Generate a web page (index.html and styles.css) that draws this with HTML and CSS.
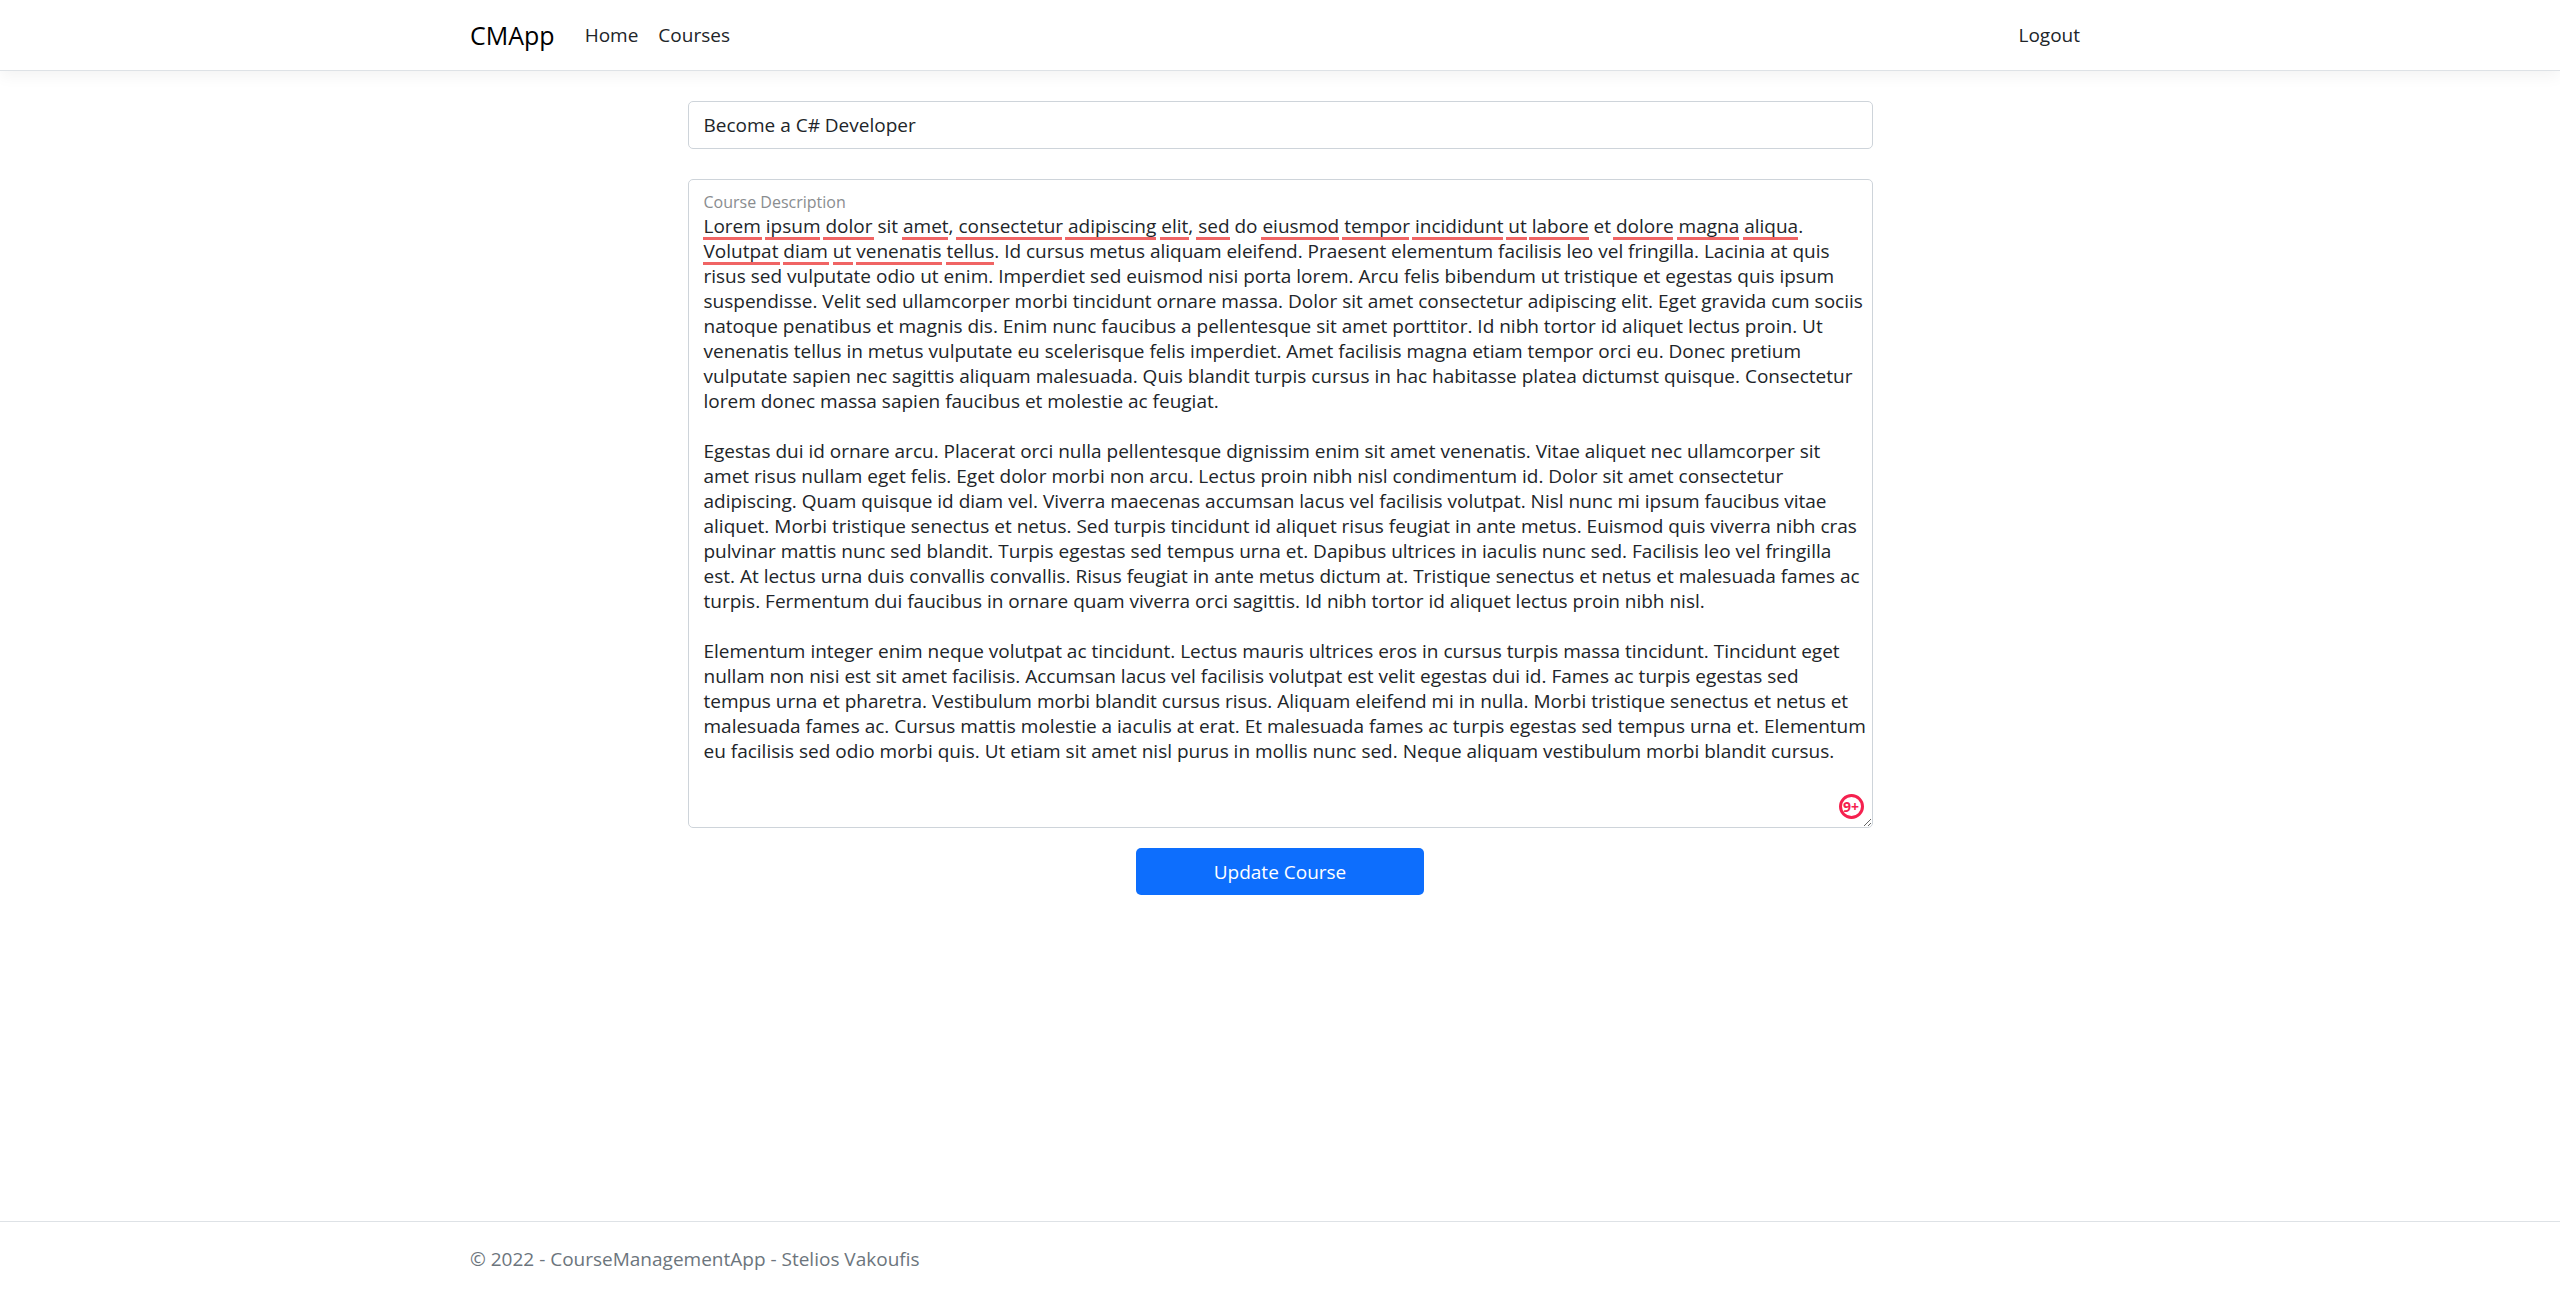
FILE: index.html
```html
<!DOCTYPE html>
<html lang="en">
<head>
<meta charset="utf-8">
<meta name="viewport" content="width=device-width, initial-scale=1">
<title>Update Course - CMApp</title>
<link rel="stylesheet" href="styles.css">
</head>
<body>
<header class="navbar">
  <nav class="container navbar-inner">
    <a class="brand" href="#">CMApp</a>
    <a class="nav-link" href="#">Home</a>
    <a class="nav-link" href="#">Courses</a>
    <a class="nav-link nav-end" href="#">Logout</a>
  </nav>
</header>
<main class="main">
  <form class="course-form">
    <input class="field" type="text" aria-label="Course Title" value="Become a C# Developer">
    <div class="floating">
      <textarea class="field description" id="description" wrap="off" spellcheck="false">Lorem ipsum dolor sit amet, consectetur adipiscing elit, sed do eiusmod tempor incididunt ut labore et dolore magna aliqua.
Volutpat diam ut venenatis tellus. Id cursus metus aliquam eleifend. Praesent elementum facilisis leo vel fringilla. Lacinia at quis
risus sed vulputate odio ut enim. Imperdiet sed euismod nisi porta lorem. Arcu felis bibendum ut tristique et egestas quis ipsum
suspendisse. Velit sed ullamcorper morbi tincidunt ornare massa. Dolor sit amet consectetur adipiscing elit. Eget gravida cum sociis
natoque penatibus et magnis dis. Enim nunc faucibus a pellentesque sit amet porttitor. Id nibh tortor id aliquet lectus proin. Ut
venenatis tellus in metus vulputate eu scelerisque felis imperdiet. Amet facilisis magna etiam tempor orci eu. Donec pretium
vulputate sapien nec sagittis aliquam malesuada. Quis blandit turpis cursus in hac habitasse platea dictumst quisque. Consectetur
lorem donec massa sapien faucibus et molestie ac feugiat.

Egestas dui id ornare arcu. Placerat orci nulla pellentesque dignissim enim sit amet venenatis. Vitae aliquet nec ullamcorper sit
amet risus nullam eget felis. Eget dolor morbi non arcu. Lectus proin nibh nisl condimentum id. Dolor sit amet consectetur
adipiscing. Quam quisque id diam vel. Viverra maecenas accumsan lacus vel facilisis volutpat. Nisl nunc mi ipsum faucibus vitae
aliquet. Morbi tristique senectus et netus. Sed turpis tincidunt id aliquet risus feugiat in ante metus. Euismod quis viverra nibh cras
pulvinar mattis nunc sed blandit. Turpis egestas sed tempus urna et. Dapibus ultrices in iaculis nunc sed. Facilisis leo vel fringilla
est. At lectus urna duis convallis convallis. Risus feugiat in ante metus dictum at. Tristique senectus et netus et malesuada fames ac
turpis. Fermentum dui faucibus in ornare quam viverra orci sagittis. Id nibh tortor id aliquet lectus proin nibh nisl.

Elementum integer enim neque volutpat ac tincidunt. Lectus mauris ultrices eros in cursus turpis massa tincidunt. Tincidunt eget
nullam non nisi est sit amet facilisis. Accumsan lacus vel facilisis volutpat est velit egestas dui id. Fames ac turpis egestas sed
tempus urna et pharetra. Vestibulum morbi blandit cursus risus. Aliquam eleifend mi in nulla. Morbi tristique senectus et netus et
malesuada fames ac. Cursus mattis molestie a iaculis at erat. Et malesuada fames ac turpis egestas sed tempus urna et. Elementum
eu facilisis sed odio morbi quis. Ut etiam sit amet nisl purus in mollis nunc sed. Neque aliquam vestibulum morbi blandit cursus.</textarea>
      <label class="floating-label" for="description">Course Description</label>
      <svg class="spelling" width="1185" height="100" viewBox="0 0 1185 100" aria-hidden="true">
        <path d="M15 59.5h59M77 59.5h55M135 59.5h51M214 59.5h46M268 59.5h106M377 59.5h91M472 59.5h29M508 59.5h34M573 59.5h78M654 59.5h67M724 59.5h91M818 59.5h21M841 59.5h60M925 59.5h60M989 59.5h62M1055 59.5h55M15 84.5h77M95 84.5h46M145 84.5h20M168 84.5h86M258 84.5h48"/>
      </svg>
      <span class="badge">9+</span>
    </div>
    <button class="submit" type="button">Update Course</button>
  </form>
</main>
<footer class="footer">
  <div class="container">© 2022 - CourseManagementApp - Stelios Vakoufis</div>
</footer>
</body>
</html>
```
FILE: styles.css
```css
* { box-sizing: border-box; }

body {
  margin: 0;
  min-height: 100vh;
  display: flex;
  flex-direction: column;
  background: #fff;
  color: #212529;
  font: 19px/30px "Segoe UI", "Open Sans", "Noto Sans", sans-serif;
}

.container {
  width: 100%;
  max-width: 1650px;
  margin: 0 auto;
  padding: 0 15px;
}

.navbar {
  padding: 10px 0;
  border-bottom: 1px solid #dee2e6;
  box-shadow: 0 5px 15px rgba(0, 0, 0, .05);
}

.navbar-inner {
  display: flex;
  align-items: center;
  min-height: 50px;
}

.brand {
  margin-right: 20px;
  color: #000;
  font-size: 25px;
  text-decoration: none;
}

.nav-link {
  padding: 10px;
  color: #212529;
  text-decoration: none;
}

.nav-end { margin-left: auto; }

.main {
  flex: 1;
  padding: 30px 15px;
}

.course-form {
  display: flex;
  flex-direction: column;
  max-width: 1185px;
  margin: 0 auto;
}

.field {
  display: block;
  width: 100%;
  height: 48px;
  padding: 8px 15px;
  border: 1px solid #ced4da;
  border-radius: 5px;
  background: #fff;
  color: #212529;
  font: inherit;
}

.floating {
  position: relative;
  margin-top: 30px;
}

.description {
  height: 649px;
  padding-top: 34px;
  line-height: 25px;
  overflow: hidden;
  resize: both;
}

.floating-label {
  position: absolute;
  top: 8px;
  left: 16px;
  color: #8a8d90;
  font-size: 16px;
}

.spelling {
  position: absolute;
  top: 0;
  left: 0;
  fill: none;
  stroke: #f06464;
  stroke-width: 3px;
  pointer-events: none;
}

.badge {
  position: absolute;
  right: 9px;
  bottom: 9px;
  width: 25px;
  height: 25px;
  border: 3px solid #f5214f;
  border-radius: 50%;
  color: #f5214f;
  font-family: "Open Sans", sans-serif;
  font-size: 14px;
  font-weight: 700;
  line-height: 19px;
  text-align: center;
}

.submit {
  align-self: center;
  width: 288px;
  height: 47px;
  margin-top: 20px;
  border: 0;
  border-radius: 5px;
  background: #0d6efd;
  color: #fff;
  font: inherit;
}

.footer {
  border-top: 1px solid #dee2e6;
  color: #6c757d;
  line-height: 75px;
}
```
